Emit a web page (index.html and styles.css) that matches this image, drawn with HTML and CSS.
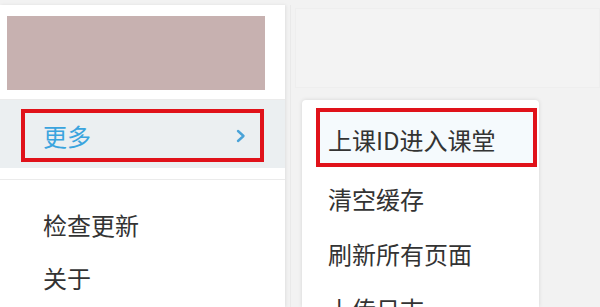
FILE: index.html
```html
<!DOCTYPE html>
<html lang="zh-CN">
<head>
<meta charset="utf-8">
<link rel="stylesheet" href="styles.css">
</head>
<body>
<div class="screen">
  <div class="menu">
    <div class="avatar-area"><div class="avatar"></div></div>
    <div class="sep"></div>
    <div class="more-row">
      <div class="more-box">
        <span class="more-label">更多</span>
        <svg class="chev" width="12" height="16" viewBox="0 0 12 16"><path d="M3 3 L8.5 8 L3 13" fill="none" stroke="#4aa3d8" stroke-width="2.4" stroke-linecap="round" stroke-linejoin="round"/></svg>
      </div>
    </div>
    <div class="sep sep-low"></div>
    <div class="items">
      <div class="item">检查更新</div>
      <div class="item">关于</div>
    </div>
  </div>
  <div class="right-pane"><div class="right-inner"></div></div>
  <div class="submenu">
    <div class="sub-item sub-hl">上课ID进入课堂</div>
    <div class="sub-item sub-first">清空缓存</div>
    <div class="sub-item">刷新所有页面</div>
    <div class="sub-item">上传日志</div>
  </div>
</div>
</body>
</html>
```
FILE: styles.css
```css
html, body {
  margin: 0;
  padding: 0;
  width: 600px;
  height: 307px;
  overflow: hidden;
  background: #f2f2f2;
  font-family: "Noto Sans CJK SC", "Noto Sans", sans-serif;
}
.screen {
  position: relative;
  display: flex;
  padding-top: 5px;
  height: 302px;
}
.menu {
  width: 285px;
  background: #ffffff;
  box-shadow: 1px 0 3px rgba(0,0,0,0.08);
  display: flex;
  flex-direction: column;
  flex-shrink: 0;
}
.avatar-area {
  padding: 11px 20px 9px 7px;
}
.avatar {
  height: 74px;
  background: #c7b1b0;
}
.sep {
  height: 1px;
  background: #ebebeb;
}
.more-row {
  background: #ebeff1;
  padding: 9px 21px 6px 21px;
}
.more-box {
  height: 45px;
  border: 4px solid #e0121a;
  display: flex;
  align-items: center;
  justify-content: space-between;
  padding: 0 13px 0 18px;
}
.more-label {
  font-size: 24px;
  color: #3aa4de;
  line-height: 1;
}
.sep-low {
  margin-top: 11px;
}
.items {
  padding-top: 18px;
}
.item {
  height: 53px;
  display: flex;
  align-items: center;
  padding-left: 43px;
  font-size: 24px;
  color: #333333;
}
.right-pane {
  flex: 1;
  margin-left: 5px;
  border-left: 1px solid #e9e9e9;
  padding: 3px 0 0 4px;
}
.right-inner {
  height: 78px;
  background: #f3f3f3;
  border: 1px solid #eeeeee;
}
.submenu {
  position: absolute;
  left: 302px;
  top: 100px;
  width: 237px;
  height: 207px;
  background: #ffffff;
  border-radius: 4px 4px 0 0;
  box-shadow: 0 0 4px rgba(0,0,0,0.12);
  padding: 8px 2px 0 14px;
  box-sizing: border-box;
  overflow: hidden;
}
.sub-item {
  height: 55px;
  display: flex;
  align-items: center;
  padding-left: 12px;
  font-size: 24px;
  color: #333333;
  flex-shrink: 0;
}
.sub-hl {
  border: 4px solid #e0121a;
  background: #f5fafd;
  padding-left: 8px;
  padding-top: 4px;
  box-sizing: content-box;
  height: 47px;
}
.sub-first {
  margin-top: 4px;
}
```
